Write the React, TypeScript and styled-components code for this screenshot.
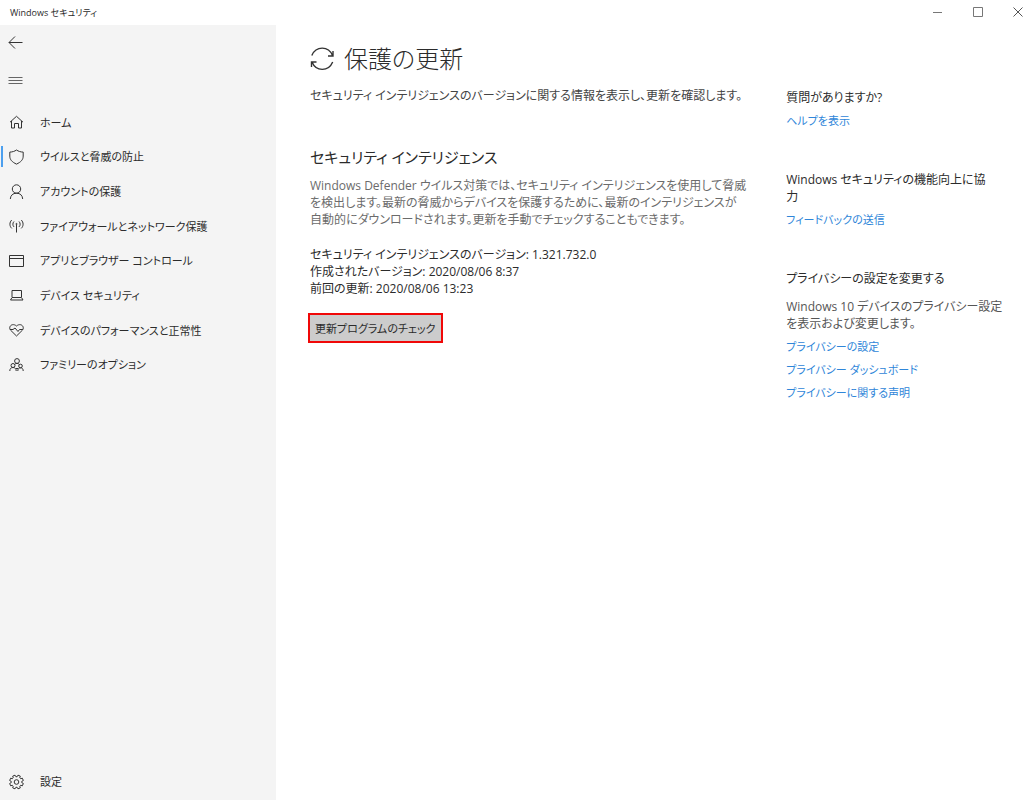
import React from "react";
import styled, { createGlobalStyle } from "styled-components";

const GlobalStyle = createGlobalStyle`
  *, *::before, *::after { box-sizing: border-box; }
  body {
    margin: 0;
    background: #fff;
    color: #2b2b2b;
    font-family: "Open Sans", "Noto Sans CJK JP", sans-serif;
    font-size: 12px;
    line-height: 17px;
    font-feature-settings: "palt";
  }
  h1, h2, h3, p, ul { margin: 0; padding: 0; }
  ul { list-style: none; }
  button { font: inherit; font-feature-settings: inherit; color: inherit; cursor: pointer; }
`;

const Window = styled.div`
  display: flex;
  flex-direction: column;
  min-height: 100vh;
`;

const TitleBar = styled.header`
  display: flex;
  justify-content: space-between;
  align-items: center;
  height: 25px;
  padding-left: 10px;
  font-size: 9px;
`;

const Caption = styled.div`
  display: flex;
  height: 25px;
`;

const CaptionButton = styled.button`
  display: grid;
  place-items: center;
  width: 40px;
  padding: 0 0 2px 8px;
  border: 0;
  background: transparent;
`;

const Columns = styled.div`
  display: flex;
  flex: 1;
`;

const Sidebar = styled.aside`
  display: flex;
  flex-direction: column;
  flex: 0 0 276px;
  background: #f4f4f4;
`;

const IconButton = styled.button`
  display: flex;
  align-items: center;
  width: 40px;
  height: 36px;
  padding: 0 0 0 8px;
  border: 0;
  background: transparent;
`;

const SideTools = styled.div`
  display: grid;
  gap: 1px;
  padding-bottom: 7px;
`;

const NavList = styled.ul`
  display: grid;
  grid-auto-rows: 1fr;
  height: 277px;
`;

const NavLink = styled.a<{ $active?: boolean }>`
  display: flex;
  align-items: center;
  gap: 16px;
  height: 100%;
  padding-left: 8px;
  font-size: 11px;
  color: #2b2b2b;
  text-decoration: none;
  white-space: nowrap;
  position: relative;
  &::before {
    content: "";
    position: absolute;
    left: 1px;
    width: 2px;
    height: 21px;
    background: ${(p) => (p.$active ? "#4c9fee" : "transparent")};
  }
`;

const SidebarFoot = styled.div`
  height: 37px;
  margin-top: auto;
`;

const Content = styled.main`
  display: flex;
  flex: 1;
  gap: 40px;
  padding: 16px 32px 32px 34px;
`;

const Article = styled.section`
  flex: 1 1 438px;
  white-space: nowrap;
`;

const PageTitle = styled.h1`
  display: flex;
  align-items: center;
  gap: 10px;
  height: 36px;
  font-size: 24px;
  font-weight: 300;
  line-height: 36px;
`;

const Lead = styled.p`
  margin-top: 10px;
  color: #444;
`;

const SectionTitle = styled.h2`
  margin-top: 41px;
  font-size: 15px;
  font-weight: 400;
  line-height: 24px;
`;

const Description = styled.p`
  margin-top: 8px;
  color: #6b6b6b;
`;

const Details = styled.p`
  margin: 18px 0 16px;
`;

const CheckButton = styled.button`
  height: 30px;
  margin-left: -2px;
  padding: 0 5px;
  border: 2px solid #f00808;
  background: #ccc;
  font-size: 11px;
`;

const HelpPane = styled.aside`
  flex: 0 0 212px;
  padding-top: 48px;
  white-space: nowrap;
`;

const HelpGroup = styled.section`
  margin-bottom: 42px;
`;

const HelpTitle = styled.h3`
  font-size: 12px;
  font-weight: 400;
  line-height: 17px;
`;

const HelpText = styled.p`
  margin-top: 11px;
  color: #555;
`;

const HelpLink = styled.a`
  display: block;
  width: max-content;
  margin-top: 6px;
  font-size: 11px;
  color: #2f86d9;
  text-decoration: none;
`;

type IconProps = { children: React.ReactNode; size?: number; box?: number; weight?: number; color?: string };

const Icon = ({ children, size = 16, box = 16, weight = 1, color = "#333" }: IconProps) => (
  <svg
    width={size}
    height={size}
    viewBox={`0 0 ${box} ${box}`}
    fill="none"
    stroke={color}
    strokeWidth={weight}
    aria-hidden="true"
  >
    {children}
  </svg>
);

const navItems = [
  { label: "ホーム", icon: <path d="M2 8.200 8.500 2.300l6.500 5.900M3.500 7v7h3V9.500h4V14h3V7" /> },
  {
    label: "ウイルスと脅威の防止",
    active: true,
    icon: <path d="M8.500 1C6.600 2.300 4.500 3 1.800 3.100v4c0 3.600 2.300 6 6.700 8 4.400-2 6.700-4.400 6.700-8v-4C12.500 3 10.400 2.300 8.500 1z" />,
  },
  {
    label: "アカウントの保護",
    icon: (
      <>
        <circle cx="8.500" cy="5" r="4.200" />
        <path d="M2.300 15c.3-3.700 2.500-5.800 6.200-5.800s5.900 2.100 6.200 5.800" />
      </>
    ),
  },
  {
    label: "ファイアウォールとネットワーク保護",
    icon: (
      <>
        <path d="M3.800 2C1.300 4.200 1.300 8.200 3.800 10.400M6 3.500c-1.500 1.500-1.500 3.900 0 5.400M13.200 2c2.500 2.200 2.500 6.200 0 8.400M11 3.500c1.500 1.500 1.500 3.900 0 5.400M8.500 6.500V14.500" />
        <circle cx="8.500" cy="6" r=".6" />
      </>
    ),
  },
  { label: "アプリとブラウザー コントロール", icon: <path d="M1.500 2.500h14v11h-14zM1.500 5.500h14" /> },
  { label: "デバイス セキュリティ", icon: <path d="M4 10V3.500h9.500V10M4 10.500h9.500l1.500 2.500H2.500z" /> },
  {
    label: "デバイスのパフォーマンスと正常性",
    icon: (
      <path d="M8.500 14 2.600 8.200C-.2 4.700 4.300.4 8.500 4c4.200-3.600 8.700.7 5.900 4.200zM2 7.500h3L7 6l3 3.500 1.500-2h3.300" />
    ),
  },
  {
    label: "ファミリーのオプション",
    icon: (
      <>
        <circle cx="9" cy="4" r="2.400" />
        <circle cx="5" cy="8.500" r="2" />
        <circle cx="12.500" cy="9" r="1.800" />
        <path d="M1.800 14c0-2.300 1.200-3.500 3.200-3.500s3.200 1.200 3.200 3.500M9.800 14c0-2 .9-3.200 2.700-3.200s2.700 1.200 2.700 3.200M6.700 7.500c.5-.8 1.300-1.100 2.300-1.100s1.900.4 2.300 1.200M8 11.500h2" />
      </>
    ),
  },
];

const GearIcon = () => {
  const points: string[] = [];
  for (let i = 0; i < 8; i++) {
    [
      [-0.28, 5.3],
      [-0.18, 7],
      [0.18, 7],
      [0.28, 5.3],
    ].forEach(([offset, radius]) => {
      const a = (i * Math.PI) / 4 + offset + Math.PI / 8;
      points.push(`${(8.5 + radius * Math.sin(a)).toFixed(2)},${(8 - radius * Math.cos(a)).toFixed(2)}`);
    });
  }
  return (
    <Icon>
      <polygon points={points.join(" ")} />
      <circle cx="8.500" cy="8" r="2.300" />
    </Icon>
  );
};

export default function App() {
  return (
    <>
      <GlobalStyle />
      <Window lang="ja">
        <TitleBar>
          <span>Windows セキュリティ</span>
          <Caption>
            <CaptionButton aria-label="最小化">
              <Icon size={10} box={10} color="#777"><path d="M0 5.500h9" /></Icon>
            </CaptionButton>
            <CaptionButton aria-label="最大化">
              <Icon size={10} box={10} color="#777"><path d="M.5 .5h9v9h-9z" /></Icon>
            </CaptionButton>
            <CaptionButton aria-label="閉じる">
              <Icon size={10} box={10} color="#555"><path d="M.5 .5l9 9M9.500 .5l-9 9" /></Icon>
            </CaptionButton>
          </Caption>
        </TitleBar>
        <Columns>
          <Sidebar>
            <SideTools>
              <IconButton aria-label="戻る">
                <Icon><path d="M14.500 7.500H1M7 1.500l-6 6 6 6" /></Icon>
              </IconButton>
              <IconButton aria-label="メニュー">
                <Icon color="#666"><path d="M.5 5.500h14M.5 8.500h14M.5 11.500h14" /></Icon>
              </IconButton>
            </SideTools>
            <nav>
              <NavList>
                {navItems.map((item) => (
                  <li key={item.label}>
                    <NavLink href="#" $active={item.active}>
                      <Icon>{item.icon}</Icon>
                      {item.label}
                    </NavLink>
                  </li>
                ))}
              </NavList>
            </nav>
            <SidebarFoot>
              <NavLink href="#"><GearIcon />設定</NavLink>
            </SidebarFoot>
          </Sidebar>
          <Content>
            <Article>
              <PageTitle>
                <Icon size={24} box={24} weight={1.4}>
                  <path d="M1.800 8.500C6-1.300 18.500-1.300 22.500 8.500M23 4v5h-5M22.700 15C18.500 24.800 6 24.800 2 15M1.500 20v-5h5" />
                </Icon>
                保護の更新
              </PageTitle>
              <Lead>セキュリティ インテリジェンスのバージョンに関する情報を表示し、更新を確認します。</Lead>
              <SectionTitle>セキュリティ インテリジェンス</SectionTitle>
              <Description>
                Windows Defender ウイルス対策では、セキュリティ インテリジェンスを使用して脅威<br />
                を検出します。最新の脅威からデバイスを保護するために、最新のインテリジェンスが<br />
                自動的にダウンロードされます。更新を手動でチェックすることもできます。
              </Description>
              <Details>
                セキュリティ インテリジェンスのバージョン: 1.321.732.0<br />
                作成されたバージョン: 2020/08/06 8:37<br />
                前回の更新: 2020/08/06 13:23
              </Details>
              <CheckButton>更新プログラムのチェック</CheckButton>
            </Article>
            <HelpPane>
              <HelpGroup>
                <HelpTitle>質問がありますか?</HelpTitle>
                <HelpLink href="#">ヘルプを表示</HelpLink>
              </HelpGroup>
              <HelpGroup>
                <HelpTitle>Windows セキュリティの機能向上に協<br />力</HelpTitle>
                <HelpLink href="#">フィードバックの送信</HelpLink>
              </HelpGroup>
              <HelpGroup>
                <HelpTitle>プライバシーの設定を変更する</HelpTitle>
                <HelpText>Windows 10 デバイスのプライバシー設定<br />を表示および変更します。</HelpText>
                <HelpLink href="#">プライバシーの設定</HelpLink>
                <HelpLink href="#">プライバシー ダッシュボード</HelpLink>
                <HelpLink href="#">プライバシーに関する声明</HelpLink>
              </HelpGroup>
            </HelpPane>
          </Content>
        </Columns>
      </Window>
    </>
  );
}
